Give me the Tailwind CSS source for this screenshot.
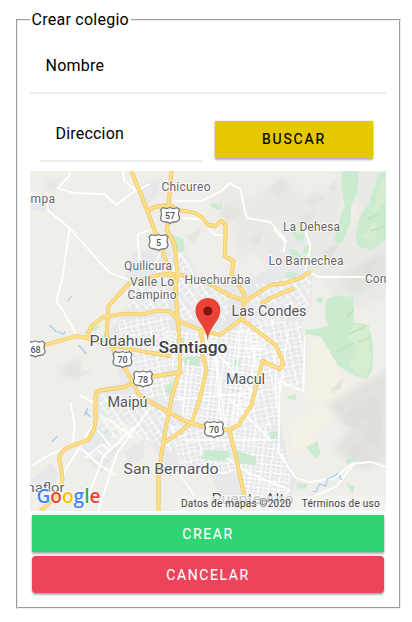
<!DOCTYPE html>
<html lang="es">
<head>
<meta charset="utf-8">
<title>Crear colegio</title>
<script src="https://cdn.jsdelivr.net/npm/@tailwindcss/browser@4"></script>
</head>
<body class="bg-white text-black font-['Roboto',sans-serif] h-[622px] overflow-hidden">
<form class="pt-[10px] pl-[15.5px]">
<fieldset class="w-[385px] h-[599px] border-2 [border-style:groove] border-[#f0f0f0] pl-3 pr-[13px]">
  <legend class="px-[2px] text-base leading-5 tracking-[0.25px] h-5 w-[101px] whitespace-nowrap">Crear colegio</legend>
  <div class="h-[64px] border-b-2 border-[#ececec] pl-4 pt-[26px] text-base leading-5 tracking-[0.25px]">Nombre</div>
  <div class="flex h-[77px] pl-[10px] pt-[26px]">
    <div class="w-[163px] h-[42px] border-b-2 border-[#ececec] pl-4 pt-[4px] text-base leading-5 tracking-[0.2px]">Direccion</div>
    <button type="button" class="ml-[12.5px] mt-[0.5px] w-[158px] h-[37px] bg-[#e6c800] text-sm leading-[37px] font-normal tracking-[1.8px] [-webkit-text-stroke:0.2px_black] shadow-[0_2px_2px_rgba(0,0,0,0.28),0_0_2px_rgba(0,0,0,0.2)]">BUSCAR</button>
  </div>
  <div class="relative w-[356.5px] h-[340px] overflow-hidden">
    <svg class="block" width="356.5" height="340" viewBox="29.5 171 356.5 340" font-family="Roboto, sans-serif">
      <defs>
        <pattern id="g1" width="10" height="8" patternUnits="userSpaceOnUse" patternTransform="rotate(7)"><path d="M0 0H10M0 4.500L10 4M0 0V8M5 0L6 8" stroke="#fff" stroke-width="1.200" fill="none"/></pattern>
        <pattern id="g2" width="12" height="9" patternUnits="userSpaceOnUse" patternTransform="rotate(-12)"><path d="M0 0H12M0 5L12 4M0 0V9M7 0L6 9" stroke="#fff" stroke-width="1.200" fill="none"/></pattern>
        <pattern id="g3" width="13" height="11" patternUnits="userSpaceOnUse" patternTransform="rotate(-34)"><path d="M0 0H13M0 6H8M0 0V11M7 0V11" stroke="#fff" stroke-width="1.200" fill="none"/></pattern>
        <filter id="soft"><feGaussianBlur stdDeviation="3"/></filter>
        <filter id="fine"><feGaussianBlur stdDeviation="1"/></filter>
      </defs>
      <path fill="#efeee9" d="M29 171H387V511H29z"/>
      <g filter="url(#soft)">
        <path fill="#e9e9e6" d="M211 200L235 182 245 202 281 178 304 195 340 190 335 171H387V300L340 310 322 277 280 280 252 250 237 262 230 220z"/>
        <path fill="#f5f1e6" d="M312 332L335 350 345 386 365 400 345 405 305 400zM290 425L320 404 350 405 310 435 325 455 290 450zM345 200l14 8-12 22-11-3z"/>
        <path fill="#e2e1de" d="M340 275L386 250 386 277 350 298zM326 405L360 385 386 370V460L358 470 333 448 350 430zM55 372l25-13-4 20zM45 182l12-2-5 12z"/>
      </g>
      <g filter="url(#fine)" fill="#dfdedb">
        <path d="M331 390l12-12-3 10-10 5zM346 413l26-17 10 12-7 16-13-4-7 10-12-7zM361 431l22-18-5 34-14-3-9 18-6-12 13-11zM319 253l21-10-10 15zM361 267l17-11-8 20z"/>
        <path fill="#e5e4e1" d="M303 203l13-11 8 7-12 10zM269 188l13-10 8 8-13 12zM218 214l12-10 13 9-15 9zM186 236l17-8-11 16zM67 374l14-14-3 13 17-4-17 9zM326 188l12-9-4 18zM300 218l18-8-9 16zM248 240l15-10-5 16z"/>
      </g>
      <g fill="#e7e8ea">
        <path d="M132 253L163 248 188 255 198 276 235 285 265 271 283 250 303 253 312 272 311 305 299 326 304 337 304 390 278 381 278 411 286 456 296 480 286 511H226L208 470 170 472 152 447 132 425 98 415 97 389 120 382 116 356 93 344 116 323 129 301 124 280z"/>
        <path d="M141 185l20-9-5 21-16 13zM30 200l16 1 8 10H31zM285 222l15 6 4 17-20 12-8-11zM75 447l26-23 17 8-27 22zM86 461l36-17-21 28zM125 451l18-12 1 18-17 12zM31 480l20-18 8 14-16 20z"/>
      </g>
      <path fill="url(#g1)" d="M165 330H262L258 405 241 426 226 430 202 423 183 419 175 389zM227 431L270 423 284 455 290 478 282 508 245 508z"/>
      <path fill="url(#g2)" d="M118 320L170 316V402L139 397 118 353zM170 425L226 433 237 474 181 470zM238 320L301 321 304 385 255 389zM238 391L278 384 278 425 232 430z"/>
      <path fill="url(#g3)" d="M99 394H135L180 421 170 454 145 439 101 437zM255 285L312 271 308 307 272 326 246 318zM175 276L225 288 229 320H180zM124 285L166 267 168 310 128 309zM161 251l25 2 8 24-22 4z"/>
      <g fill="#caebcf">
        <path d="M342 171H358L357 191 351 205 350 223 342 241Q337 247 334 240L340 216 344 206 341 184z"/>
        <path d="M378 174L386 171V239L371 250 357 246Q353 235 360 215L368 205z"/>
        <path d="M326 300Q337 292 353 298L353 322 368 325Q376 348 371 372L366 379 355 376 338 366 328 350 321 337 305 334 305 330 320 328 328 326 324 317z"/>
        <path d="M168 233L183 239 184 250 176 257 171 247zM210 203l10 2 2-6-1 11-10-2zM292 232l12 1-1 8-8-1zM304 246l7-1-1 8-7 1zM287 248l9 3 7 7-10 1zM287 272l10 1-2 6-10-1zM316 298l7-1-2 6-5-1zM205 450l24 1v11l-29-3zM236 450l19 7 1 8-20-2zM175 339l8-2 1 5-7 3zM182 357l18-1-1 10-15-1zM234 360l6-1-1 7-6-1zM233 389l6 1-1 3-6-1zM165 387l7-6-1 13-6-1zM269 432h9l1 11-9-2zM306 447l11-6 3 13-5 5zM345 463l4-7 6 3-6 6zM345 482l9 5-2 7zM296 483l11 1-1 5-10-1zM287 396l9-2-1 6-8-1zM85 331l15-7-4 6-14 4zM103 433l3-3 2 2-4 3z"/>
      </g>
      <path fill="#d8edcf" d="M352 324L368 326 369 350 372 360 364 378 354 372 349 363 358 347 347 338zM378 188l8-12v22l-14 19zM361 237l16-17-3 22z"/>
      <g stroke="#c0e2c7" stroke-width="2" fill="none"><path d="M349 334l16-8M337 352l15-9M358 342l12-5M346 318l7-8M367 219l12-5M370 231l14-4"/></g>
      <g fill="none" stroke="#fff" stroke-width="1.800" stroke-linejoin="round">
        <path d="M30 192L46 202 48 211 68 227 84 245 99 262 110 273 129 280M69 229L61 284M69 171V176L57 188 73 193 104 194 116 205 130 194 149 184M122 171L124 181 135 190M61 280L56 302 61 308 76 335M148 230L137 235 139 261M173 201L201 201 221 191 229 183 240 189 246 218 270 222 286 241M182 218L200 219 213 234 224 236M273 229L285 242 283 252M304 229L310 246 305 270 318 277 386 277M304 337L303 391 279 381 278 452 295 478 310 482 334 478 351 464 370 462 386 467M305 500L335 487 355 462M226 458L248 473 289 490 270 511M150 407L116 454 98 511M135 426L103 456 82 511M70 402L74 425 72 448M31 466L45 457 70 445M80 448L99 465 115 475M95 421L65 470 60 481M79 395L95 404"/>
        <path stroke-width="1.400" d="M97 430l13 16M104 417l28 20M85 458l16-14 8 6 11-8M97 450l10 9M161 251l-9 18M179 252l-7 24M215 350l10 78M188 360l-6 56M274 340l2 67M288 330l-9 63M228 398L270 440M177 472l25 35M188 472l39 1M213 340l8 85M240 325l-8 100M200 335l55 60M182 440h95M170 400l90-8M183 345l80 4"/>
      </g>
      <path d="M67 301l4-5M57 332l6 2 2-3M49 325l7 7M84 416l3-8-1 5 4 4M51 442l6-6M78 345l8 9M312 492l4-1 3-7 6 2 2-7 7-3 4-3M339 475l2 5" stroke="#9fcdf2" stroke-width="1.200" fill="none"/>
      <g fill="none" stroke-linejoin="round">
        <path id="roads" stroke="#f0cb70" stroke-width="3.800" d="M131 171L147 211 157 238 167 264 175 287 177 320 180 350 179 371 171 398 163 440 158 475 158 511M171 171L168 206M145 212L154 207 169 205 178 210 195 213 202 218 207 225 215 226 220 221 225 224 225 238 224 256 233 261 231 275 236 281 244 295 242 318M169 216L166 230 174 244 177 274 174 293M129 283L108 306 106 335 113 350 128 374 138 394 150 402 166 411 182 420 200 426 229 430 238 425 251 405 262 361 279 369Q284 366 281 358L275 345 241 319 228 329 219 335 200 330 180 322 169 311 155 311 144 314 121 314 103 317 91 326 86 338 76 336 30 349M86 338L115 346 145 352 170 356M95 420L95 397Q95 390 103 390L124 387 142 378 182 372M95 396V421Q94 432 87 440L66 448Q56 455 60 464L62 480 57 495 40 511M199 329L202 340 202 355 206 370 199 400 192 421 181 431 163 443M229 430L236 460 243 492 248 511M129 283L157 275 172 274 187 276M207 283L230 296 245 301 270 285 285 283 300 278 310 271M260 304L270 298 294 288"/>
        <use href="#roads"/>
        <path stroke="#ffdf86" stroke-width="2.500" d="M131 171L147 211 157 238 167 264 175 287 177 320 180 350 179 371 171 398 163 440 158 475 158 511M171 171L168 206M145 212L154 207 169 205 178 210 195 213 202 218 207 225 215 226 220 221 225 224 225 238 224 256 233 261 231 275 236 281 244 295 242 318M169 216L166 230 174 244 177 274 174 293M129 283L108 306 106 335 113 350 128 374 138 394 150 402 166 411 182 420 200 426 229 430 238 425 251 405 262 361 279 369Q284 366 281 358L275 345 241 319 228 329 219 335 200 330 180 322 169 311 155 311 144 314 121 314 103 317 91 326 86 338 76 336 30 349M86 338L115 346 145 352 170 356M95 420L95 397Q95 390 103 390L124 387 142 378 182 372M95 396V421Q94 432 87 440L66 448Q56 455 60 464L62 480 57 495 40 511M199 329L202 340 202 355 206 370 199 400 192 421 181 431 163 443M229 430L236 460 243 492 248 511M129 283L157 275 172 274 187 276M207 283L230 296 245 301 270 285 285 283 300 278 310 271M260 304L270 298 294 288"/>
      </g>
      <defs><path id="shield" d="M-7 -8Q-4 -6 0 -8 4 -6 7 -8L9.500 -5.500Q7.500 -2 9.500 2 9.500 6.500 4 6.500 1.500 6.500 0 8 -1.500 6.500 -4 6.500 -9.500 6.500 -9.500 2 -7.500 -2 -9.500 -5.500z" fill="#fff" stroke="#77797c" stroke-width="1.300"/></defs>
      <g font-size="9" font-weight="500" fill="#505357" text-anchor="middle">
        <use href="#shield" x="169.500" y="215.500"/><text x="169.500" y="219">57</text>
        <use href="#shield" x="158" y="242.500"/><text x="158" y="246">5</text>
        <use href="#shield" x="35" y="349"/><text x="35" y="352.500">68</text>
        <use href="#shield" x="122" y="359.500"/><text x="122" y="363">70</text>
        <use href="#shield" x="142.500" y="379"/><text x="142.500" y="382.500">78</text>
        <use href="#shield" x="213.500" y="429.500"/><text x="213.500" y="433">70</text>
      </g>
      <g fill="#63666a" stroke="#fff" stroke-opacity=".8" stroke-width="2" paint-order="stroke" stroke-linejoin="round" font-size="12">
        <text x="30" y="203" textLength="24.500">mpa</text>
        <text x="161" y="191" textLength="49">Chicureo</text>
        <text x="282.500" y="231" textLength="57">La Dehesa</text>
        <text x="268" y="265" textLength="75">Lo Barnechea</text>
        <text x="364.500" y="283">Com</text>
        <text x="123.500" y="270" textLength="48">Quilicura</text>
        <text x="129.500" y="286" textLength="44">Valle Lo</text>
        <text x="127" y="299" textLength="49">Campino</text>
        <text x="184" y="284" textLength="66">Huechuraba</text>
        <g font-size="14" fill="#525559">
          <text x="231" y="316" textLength="75" lengthAdjust="spacingAndGlyphs">Las Condes</text>
          <text x="89" y="346" textLength="66" lengthAdjust="spacingAndGlyphs">Pudahuel</text>
          <text x="225.500" y="384" textLength="39" lengthAdjust="spacingAndGlyphs">Macul</text>
          <text x="107" y="407" textLength="40" lengthAdjust="spacingAndGlyphs">Maipú</text>
          <text x="123" y="474" textLength="95" lengthAdjust="spacingAndGlyphs">San Bernardo</text>
          <text x="211" y="504" font-size="15" textLength="82" lengthAdjust="spacingAndGlyphs">Puente Alto</text>
        </g>
        <text x="26" y="492" font-size="13.500" textLength="38" lengthAdjust="spacingAndGlyphs">naflor</text>
        <text x="158" y="353" font-size="17" font-weight="500" fill="#3c3f44" textLength="69" lengthAdjust="spacingAndGlyphs">Santiago</text>
      </g>
      <path d="M207.300 341C206 326 195 322 195 310.300A12.400 12.400 0 0 1 219.800 310.300C219.800 322 208.600 326 207.300 341z" fill="#ea4335"/>
      <circle cx="207.300" cy="311" r="4.600" fill="#811411"/>
      <text x="36" y="503" font-family="'Open Sans', sans-serif" font-size="20" font-weight="600" textLength="64" lengthAdjust="spacingAndGlyphs" stroke="#fff" stroke-width="1.500" paint-order="stroke" stroke-linejoin="round"><tspan fill="#4285f4">G</tspan><tspan fill="#ea4335">o</tspan><tspan fill="#fbbc04">o</tspan><tspan fill="#4285f4">g</tspan><tspan fill="#34a853">l</tspan><tspan fill="#ea4335">e</tspan></text>
    </svg>
    <div class="absolute right-0 bottom-0 w-[210px] h-[15px] bg-[#f5f5f5]/70 text-[10px] leading-[16px] text-[#444] flex justify-between pl-[5px] pr-[6px] whitespace-nowrap"><span class="tracking-[0.25px]">Datos de mapas ©2020</span><span class="tracking-[0.28px]">Términos de uso</span></div>
  </div>
  <button type="button" class="block mt-1 ml-[2.5px] w-[352px] h-[37px] bg-[#2fd573] text-white text-sm leading-[38px] font-normal tracking-[1.6px] [-webkit-text-stroke:0.1px_white] shadow-[0_2px_2px_rgba(0,0,0,0.28),0_0_2px_rgba(0,0,0,0.2)]">CREAR</button>
  <button type="button" class="block mt-1 ml-[2.5px] w-[352px] h-[37px] rounded bg-[#ed445c] text-white text-sm leading-[38px] font-normal tracking-[1.6px] [-webkit-text-stroke:0.1px_white] shadow-[0_2px_2px_rgba(0,0,0,0.28),0_0_2px_rgba(0,0,0,0.2)]">CANCELAR</button>
</fieldset>
</form>
</body>
</html>
